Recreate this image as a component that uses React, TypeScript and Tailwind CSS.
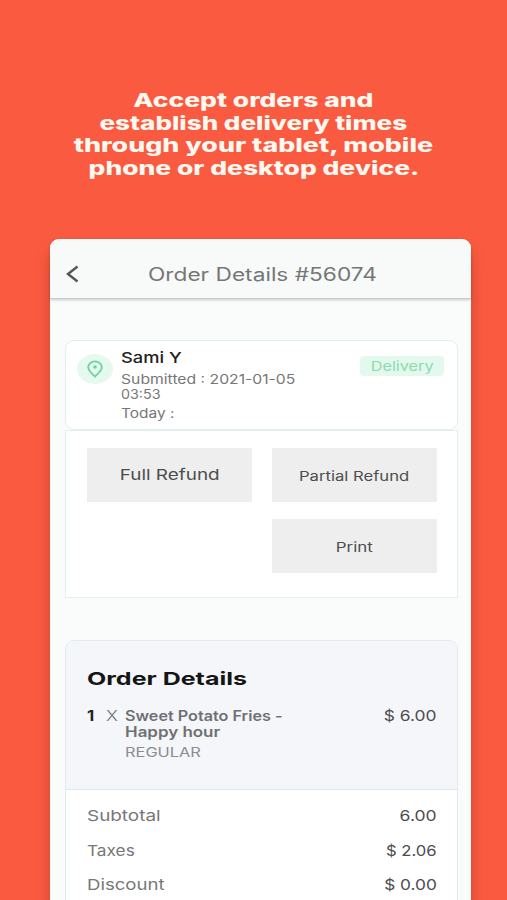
import type { ReactNode } from 'react'

const HEADLINE = [
  { text: 'Accept orders and', clases: 'scale-x-[1.39]' },
  { text: 'establish delivery times', clases: 'scale-x-[1.37]' },
  { text: 'through your tablet, mobile', clases: 'scale-x-[1.41]' },
  { text: 'phone or desktop device.', clases: 'scale-x-[1.39]' },
]

const TOTALS = [
  { label: 'Subtotal', labelClass: 'scale-x-[1.26]', value: '6.00', valueClass: 'scale-x-[1.17]' },
  { label: 'Taxes', labelClass: 'scale-x-[1.15]', value: '$ 2.06', valueClass: 'scale-x-[1.11]' },
  { label: 'Discount', labelClass: 'scale-x-[1.24]', value: '$ 0.00', valueClass: 'scale-x-[1.15]' },
]

// Wide lettering: the text is stretched horizontally from its own edge
function Wide({ className, children }: { className: string; children: ReactNode }) {
  return <span className={`block w-max whitespace-nowrap ${className}`}>{children}</span>
}

function ActionButton({ children }: { children: ReactNode }) {
  return (
    <button type="button" className="flex h-[54px] w-[165px] items-center justify-center bg-[#eeeeee] text-[#4d4d4d]">
      {children}
    </button>
  )
}

export default function App() {
  return (
    <main className="flex h-[900px] w-[507px] flex-col overflow-hidden bg-[#fa5b40] font-['Inter','Liberation_Sans',sans-serif]">
      <h1 className="flex h-[239px] shrink-0 flex-col items-center pt-[90px] text-[19px] leading-[22.5px] font-extrabold text-[#fff8f0]">
        {HEADLINE.map(l => (
          <Wide key={l.text} className={l.clases}>{l.text}</Wide>
        ))}
      </h1>

      <div className="ml-[50px] h-[720px] w-[421px] shrink-0 rounded-t-[9px] bg-[#fafbfb] shadow-[0_14px_16px_rgba(90,0,0,0.25)]">
        {/* Header */}
        <header className="flex h-[60px] items-center rounded-t-[9px] border-b border-[#c9cccc] bg-[#f8faf9] pt-[11px] shadow-[0_1px_3px_rgba(0,0,0,0.2)]">
          <svg className="ml-[16px] h-[18px] w-[14px] shrink-0" viewBox="0 0 14 18" fill="none" stroke="#555" strokeWidth="2.4">
            <path d="M11.5 1.5 2 9l9.5 7.5" />
          </svg>
          <Wide className="mt-[2px] ml-[68px] origin-left scale-x-[1.26] text-[18px] leading-6 text-[#757777]">Order Details #56074</Wide>
        </header>

        <div className="ml-[15px] w-[393px] pt-[41px]">
          {/* Customer */}
          <section className="h-[90px]">
            <div className="flex h-[90px] rounded-[9px] border border-[#e3efee] bg-white pl-[11px]">
              <div className="mt-[13px] flex h-[30px] w-[36px] shrink-0 items-center justify-center rounded-[50%] bg-[#e6f9ee]">
                <svg className="h-[18px] w-[16px]" viewBox="0 0 16 18" fill="none" stroke="#6ed3a0" strokeWidth="1.8">
                  <path d="M8 16.5C5.5 14 1.2 10.8 1.2 7.3A6.8 6 0 0 1 14.8 7.3C14.8 10.8 10.5 14 8 16.5Z" />
                  <circle cx="8" cy="7" r="1.8" fill="#6ed3a0" stroke="none" />
                </svg>
              </div>
              <div className="ml-[8px] w-[239px] text-[13px] leading-[15px] text-[#777]">
                <Wide className="mt-[7px] origin-left scale-x-[1.22] text-[15px] leading-5 font-medium text-[#222]">Sami Y</Wide>
                <Wide className="mt-[4px] origin-left scale-x-[1.21]">Submitted : 2021-01-05</Wide>
                <Wide className="origin-left scale-x-[1.1]">03:53</Wide>
                <Wide className="mt-[4px] origin-left scale-x-[1.19]">Today :</Wide>
              </div>
              <div className="mt-[15px] flex h-5 w-[84px] items-center justify-center rounded-[4px] bg-[#e4f9ed] pt-[2px] text-[13px] text-[#8cd9ae]">
                <Wide className="scale-x-[1.25]">Delivery</Wide>
              </div>
            </div>
          </section>

          {/* Actions */}
          <section className="grid h-[168px] grid-cols-[165px_165px] content-start gap-x-[20px] gap-y-[17px] border border-[#e3efef] bg-white pt-[17px] pl-[21px]">
            <ActionButton>
              <Wide className="mt-px scale-x-[1.26] text-[15px]">Full Refund</Wide>
            </ActionButton>
            <ActionButton>
              <Wide className="mt-[3px] scale-x-[1.28] text-[13px]">Partial Refund</Wide>
            </ActionButton>
            <div />
            <ActionButton>
              <Wide className="mt-[3px] scale-x-[1.3] text-[13px]">Print</Wide>
            </ActionButton>
          </section>

          {/* Order */}
          <section className="mt-[42px] h-[300px] rounded-t-[9px] border border-[#dfecee] bg-white">
            <div className="h-[149px] rounded-t-[8px] border-b border-[#dde9ed] bg-[#f4f6fa] pt-[26px] pl-[21px]">
              <h2>
                <Wide className="origin-left scale-x-[1.39] text-[18px] leading-6 font-bold text-[#151515]">Order Details</Wide>
              </h2>
              <div className="mt-[17px] flex w-[350px] text-[14px] leading-4 text-[#6f7073]">
                <div className="w-[19px]">
                  <Wide className="origin-left scale-x-[1.2] font-bold text-[#222]">1</Wide>
                </div>
                <div className="w-[19px]">
                  <Wide className="origin-left scale-x-[1.2] text-[15px] font-light">X</Wide>
                </div>
                <div className="font-semibold">
                  <Wide className="origin-left scale-x-[1.155]">Sweet Potato Fries -</Wide>
                  <Wide className="origin-left scale-x-[1.21]">Happy hour</Wide>
                  <Wide className="mt-[4px] origin-left scale-x-[1.26] text-[13px] font-normal text-[#8b8c8f]">REGULAR</Wide>
                </div>
                <Wide className="ml-auto origin-right scale-x-[1.16] text-[15px] text-[#4c4c4e]">$ 6.00</Wide>
              </div>
            </div>
            <dl className="pt-[9px] pr-[20px] pl-[21px] text-[15px]">
              {TOTALS.map(t => (
                <div key={t.label} className="flex h-[34.5px] items-start justify-between leading-[34px]">
                  <dt className="text-[#777]">
                    <Wide className={`origin-left ${t.labelClass}`}>{t.label}</Wide>
                  </dt>
                  <dd className="text-[#4c4c4e]">
                    <Wide className={`origin-right ${t.valueClass}`}>{t.value}</Wide>
                  </dd>
                </div>
              ))}
            </dl>
          </section>
        </div>
      </div>
    </main>
  )
}
